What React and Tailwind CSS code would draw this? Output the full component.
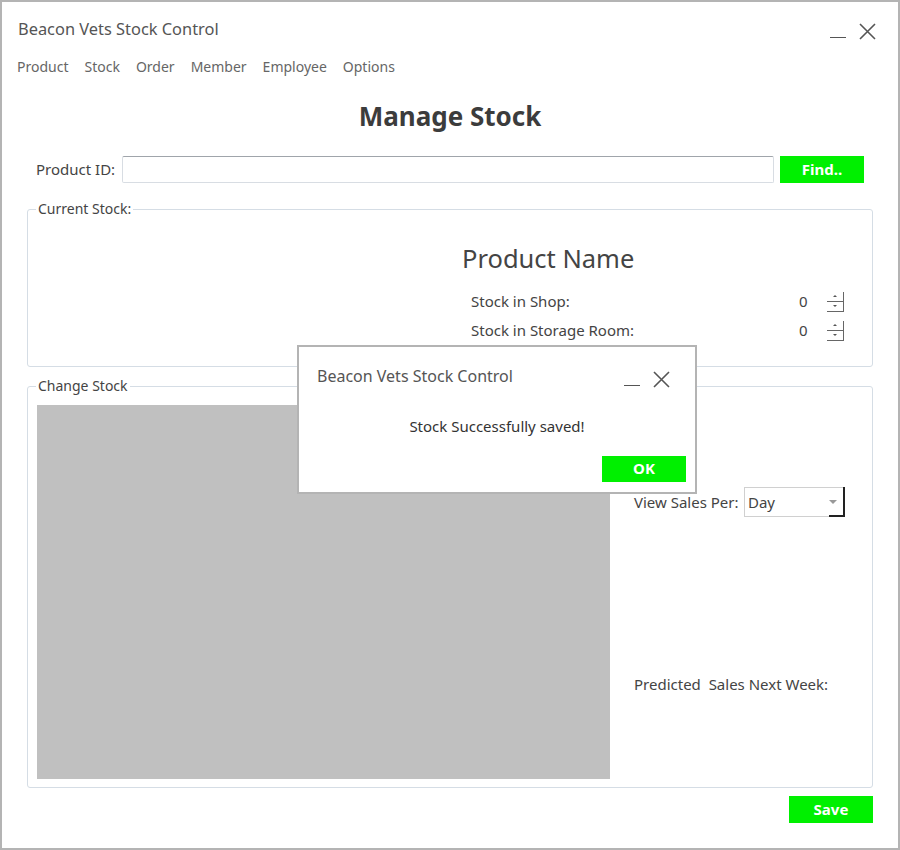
import React, { useState } from "react";

const font = { fontFamily: '"Noto Sans", "Open Sans", sans-serif' };

function MinClose({ size = 17 }) {
  return (
    <div className="flex items-end gap-[13px]">
      <div className="w-[16px] h-[1.5px] bg-[#555] mb-[2px]" />
      <svg width={size} height={size} viewBox="0 0 17 17" className="block">
        <path d="M1 1 L16 16 M16 1 L1 16" stroke="#555" strokeWidth="1.6" />
      </svg>
    </div>
  );
}

function Spinner() {
  return (
    <div className="flex flex-col w-[17px]">
      <div className="h-[10px] border-r border-b border-[#666] flex items-center justify-center">
        <div className="w-0 h-0 border-l-[2px] border-r-[2px] border-b-[2px] border-l-transparent border-r-transparent border-b-[#555]" />
      </div>
      <div className="h-[10px] border-r border-b border-[#666] flex items-center justify-center">
        <div className="w-0 h-0 border-l-[2px] border-r-[2px] border-t-[2px] border-l-transparent border-r-transparent border-t-[#555]" />
      </div>
    </div>
  );
}

function StockRow({ label, value }) {
  return (
    <div className="flex items-center h-[29px]">
      <span className="w-[328px] text-[15px] text-[#444]">{label}</span>
      <span className="w-[28px] text-[15px] text-[#444]">{value}</span>
      <Spinner />
    </div>
  );
}

export default function App() {
  const [productId, setProductId] = useState("");
  const [per, setPer] = useState("Day");

  return (
    <div style={font} className="relative w-[900px] h-[850px] bg-white border-2 border-[#b4b4b4] text-[#444]">
      {/* title bar */}
      <div className="flex items-start justify-between pl-4 pr-[22px] pt-[15px]">
        <div className="text-[16.4px] leading-6 text-[#555]">Beacon Vets Stock Control</div>
        <div className="mt-[6px]">
          <MinClose />
        </div>
      </div>

      {/* menu */}
      <div className="flex gap-4 pl-[15px] mt-[16px] text-[14px] leading-5 text-[#666]">
        <span>Product</span>
        <span>Stock</span>
        <span>Order</span>
        <span>Member</span>
        <span>Employee</span>
        <span>Options</span>
      </div>

      <h1 className="mt-[23px] text-center text-[26px] leading-8 font-bold text-[#3c3c3c]">
        Manage Stock
      </h1>

      {/* product id */}
      <div className="flex items-center mt-[24px] pl-[34px]">
        <span className="w-[86px] text-[15px] text-[#444]">Product ID:</span>
        <input
          value={productId}
          onChange={(e) => setProductId(e.target.value)}
          className="w-[652px] h-[27px] border border-[#d8dde3] border-t-[#a0a5ab] rounded-[2px] px-2 outline-none"
        />
        <button className="ml-[6px] w-[84px] h-[27px] bg-[#00f000] text-white font-bold text-[15px]">
          Find..
        </button>
      </div>

      {/* current stock */}
      <fieldset className="mt-[16px] ml-[25px] w-[846px] h-[168px] border border-[#d5dde5] rounded-[3px]">
        <legend className="ml-[8px] px-[2px] text-[14px] leading-5 text-[#444]">Current Stock:</legend>
        <div className="ml-[434px] mt-[23px] text-[25.5px] leading-8 text-[#444]">Product Name</div>
        <div className="ml-[443px] mt-[13px]">
          <StockRow label="Stock in Shop:" value="0" />
          <StockRow label="Stock in Storage Room:" value="0" />
        </div>
      </fieldset>

      {/* change stock */}
      <fieldset className="mt-[9px] ml-[25px] w-[846px] h-[412px] border border-[#d5dde5] rounded-[3px]">
        <legend className="ml-[8px] px-[2px] text-[14px] leading-5 text-[#444]">Change Stock</legend>
        <div className="flex pl-[9px] pt-[9px]">
          <div className="w-[573px] h-[374px] bg-[#c0c0c0]" />
          <div className="ml-[24px] flex flex-col">
            <div className="flex items-center mt-[82px]">
              <span className="w-[110px] text-[15px] text-[#444]">View Sales Per:</span>
              <div className="relative w-[101px] h-[30px] border border-[#d0d0d0] flex items-center">
                <span className="pl-[3px] text-[15px] text-[#444]">{per}</span>
                <div className="absolute right-[-1px] bottom-[-1px] w-[16px] h-[30px] border-r-2 border-b-2 border-[#222]" />
                <div className="absolute right-[7px] top-[12px] w-0 h-0 border-l-[4px] border-r-[4px] border-t-[4px] border-l-transparent border-r-transparent border-t-[#999]" />
                <select
                  value={per}
                  onChange={(e) => setPer(e.target.value)}
                  className="absolute inset-0 opacity-0"
                >
                  <option>Day</option>
                  <option>Week</option>
                  <option>Month</option>
                </select>
              </div>
            </div>
            <div className="mt-[156px] text-[15px] text-[#444] whitespace-pre">Predicted  Sales Next Week:</div>
          </div>
        </div>
      </fieldset>

      <div className="flex justify-end w-[871px] mt-[8px]">
        <button className="w-[84px] h-[27px] bg-[#00f000] text-white font-bold text-[15px]">Save</button>
      </div>

      {/* message dialog */}
      <div className="absolute left-[295px] top-[343px] w-[400px] h-[149px] bg-white border-2 border-[#b4b4b4]">
        <div className="flex items-start justify-between pl-[18px] pr-[25px] pt-[17px]">
          <div className="text-[16px] leading-6 text-[#555]">Beacon Vets Stock Control</div>
          <div className="mt-[7px]">
            <MinClose />
          </div>
        </div>
        <div className="mt-[27px] text-center text-[15px] text-[#333]">Stock Successfully saved!</div>
        <div className="flex justify-end pr-[9px] mt-[18px]">
          <button className="w-[84px] h-[26px] bg-[#00f000] text-white font-bold text-[15px]">OK</button>
        </div>
      </div>
    </div>
  );
}
